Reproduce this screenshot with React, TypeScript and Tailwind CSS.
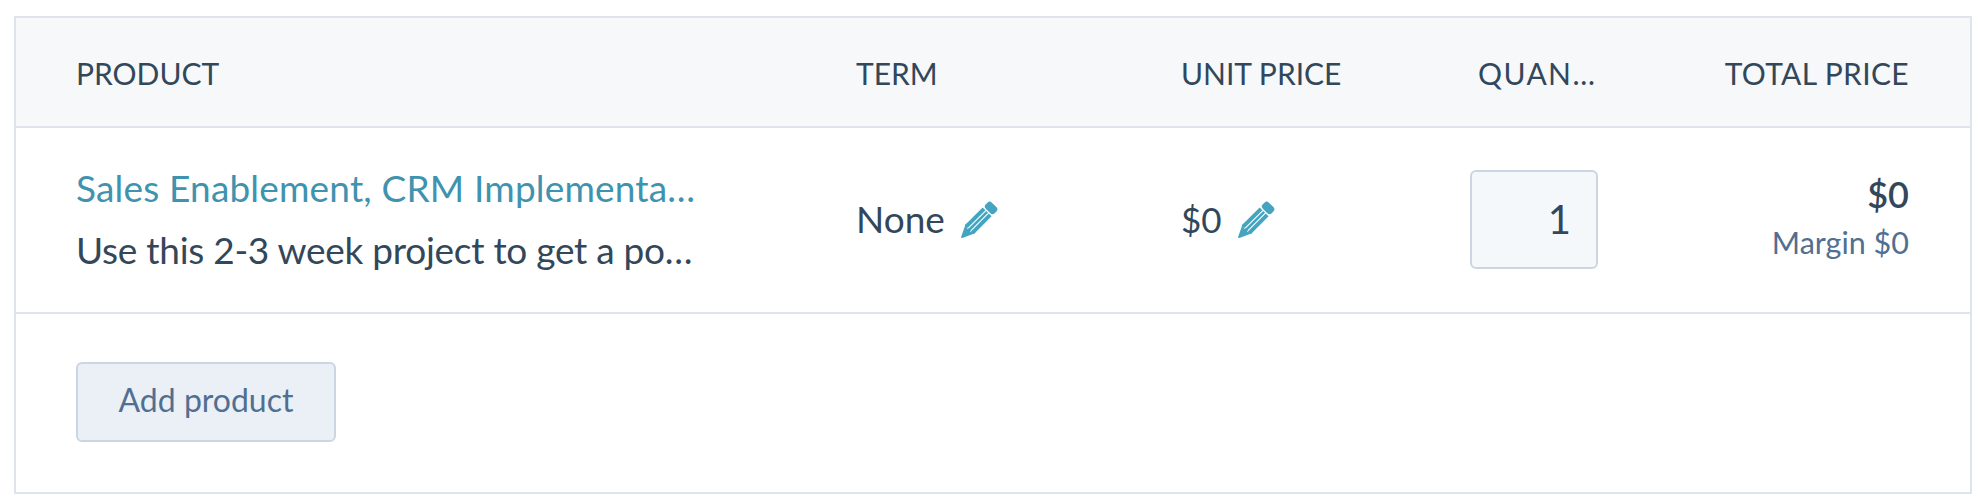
const columns = "grid grid-cols-[780px_325px_289px_128px_1fr] pl-[60px] pr-[61px] items-center"

function PencilIcon() {
	return (
		<svg viewBox="0 0 41 41" className="ml-[16px] mt-[1px] h-[37px] w-[37px] fill-[#45a5c0]">
			<g transform="translate(36 5) rotate(45)">
				<rect x="-7" y="-1" width="14" height="9.5" rx="3.5" />
				<rect x="-7" y="10" width="4.4" height="28" />
				<rect x="-1.4" y="10" width="2.8" height="28" />
				<rect x="2.6" y="10" width="4.4" height="28" />
				<path d="M-7 35 L-2.6 39 L-1.4 37 L1.4 37 L2.6 39 L7 35 L7 37 L1 50 L-0.5 50.5 L-7 37 Z" />
			</g>
		</svg>
	)
}

export default function App() {
	return (
		<div className="h-[504px] w-[1986px] bg-white pl-[14px] pt-[16px] font-['Lato',sans-serif] text-[#33475b]">
			<div className="h-[478px] w-[1958px] border-2 border-[#dfe3eb]">
				<div className={`${columns} h-[110px] border-b-2 border-[#dfe3eb] bg-[#f6f8fa] pt-[2px] text-[30px] leading-none`}>
					<div>PRODUCT</div>
					<div>TERM</div>
					<div>UNIT PRICE</div>
					<div className="pl-2 tracking-[1.4px]">QUAN…</div>
					<div className="text-right tracking-[0.35px]">TOTAL PRICE</div>
				</div>

				<div className={`${columns} h-[186px] border-b-2 border-[#dfe3eb] pb-[2px] text-[37px]`}>
					<div className="flex flex-col gap-[14px] leading-[48px]">
						<a className="tracking-[0.18px] text-[#3f93ae]">Sales Enablement, CRM Implementa…</a>
						<div className="tracking-[-0.27px]">Use this 2-3 week project to get a po…</div>
					</div>
					<div className="flex items-center">
						None
						<PencilIcon />
					</div>
					<div className="flex items-center">
						<span className="text-[35px]">$0</span>
						<PencilIcon />
					</div>
					<div className="flex h-[99px] items-center justify-end rounded-md border-2 border-[#cbd6e2] bg-[#f5f8fa] pr-[25px] text-[40px]">
						1
					</div>
					<div className="pb-[4px] text-right">
						<div className="pb-[8px] text-[36px] font-semibold leading-[40px]">$0</div>
						<div className="mt-[2px] text-[30.5px] leading-[36px] text-[#516f90]">Margin $0</div>
					</div>
				</div>

				<div className="pl-[60px] pt-[48px]">
					<button className="h-[80px] w-[260px] rounded-md border-2 border-[#cbd6e2] bg-[#eaf0f6] pb-[4px] text-[32px] text-[#516f90]">
						Add product
					</button>
				</div>
			</div>
		</div>
	)
}
